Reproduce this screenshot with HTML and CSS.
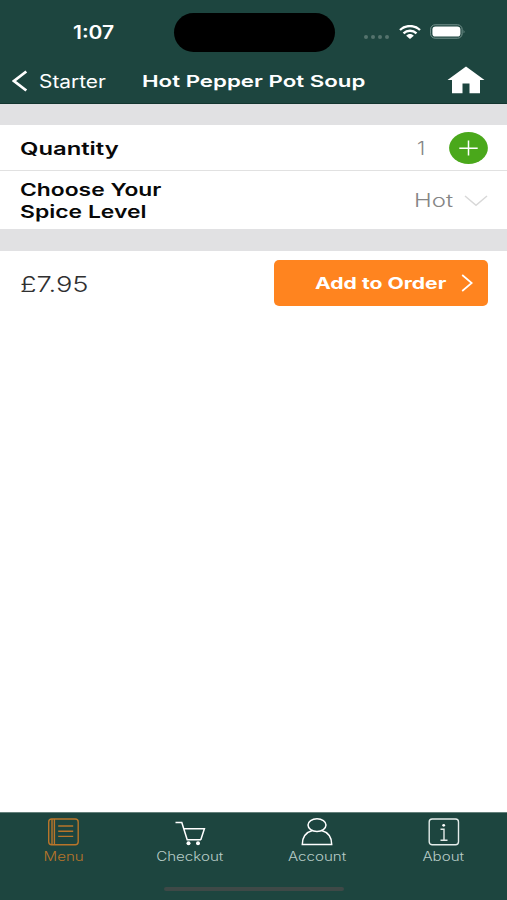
FILE: index.html
```
<!DOCTYPE html>
<html lang="en">
<head>
<meta charset="utf-8">
<title>Hot Pepper Pot Soup</title>
<link rel="stylesheet" href="styles.css">
</head>
<body>
<div class="app">
  <header class="header">
    <div class="status">
      <div class="time"><span class="wide">1:07</span></div>
      <div class="island"></div>
      <div class="dots"><i></i><i></i><i></i><i></i></div>
      <svg class="wifi" width="22" height="14" viewBox="0 0 22 14" preserveAspectRatio="none" fill="none" stroke="#fff" stroke-width="2.3">
        <path d="M1 5C6.500-.3 15.500-.3 21 5M4.500 8.300c3.600-3.400 9.400-3.400 13 0"/>
        <path d="M7.200 10.700c2-2.200 5.600-2.200 7.600 0L11 14z" fill="#fff" stroke="none"/>
      </svg>
      <svg class="battery" width="36" height="15" viewBox="0 0 36 15">
        <rect x=".6" y=".8" width="31.500" height="13.400" rx="4.500" fill="none" stroke="#789590"/>
        <rect x="2.400" y="2.400" width="28" height="10.200" rx="3.200" fill="#fff"/>
        <path d="M33.600 5.500q1.600 2 0 4z" fill="#789590"/>
      </svg>
    </div>
    <nav class="nav">
      <svg class="back" width="16" height="22" viewBox="0 0 16 22" fill="none" stroke="#fff" stroke-width="2.800"><path d="M14.300 1.500 2 11l12.300 9.500"/></svg>
      <div class="starter"><span class="wide">Starter</span></div>
      <h1 class="title"><span class="wide">Hot Pepper Pot Soup</span></h1>
      <svg class="home" width="38" height="28" viewBox="0 0 38 28" fill="#fff"><path d="M19 .5 37.500 14H33v13.300H22.500V17.500h-7v9.800H5V14H.5z"/></svg>
    </nav>
  </header>
  <main class="content">
    <div class="band first"></div>
    <section class="row quantity">
      <div class="label"><span class="wide">Quantity</span></div>
      <div class="count"><span class="wide">1</span></div>
      <svg class="plus" width="40" height="34" viewBox="0 0 40 34"><ellipse cx="19.500" cy="17" rx="19.400" ry="16" fill="#4aa81b"/><path d="M10.300 17.300h18.400M19.500 9.500v15" stroke="#fff" stroke-width="1.500"/></svg>
    </section>
    <section class="row spice">
      <div class="label"><span class="wide choose">Choose Your</span><span class="wide level">Spice Level</span></div>
      <div class="value"><span class="wide">Hot</span></div>
      <svg class="down" width="24" height="12" viewBox="0 0 24 12" fill="none" stroke="#d8d8d8" stroke-width="1.500"><path d="m1 1 11 9.300L23 1"/></svg>
    </section>
    <div class="band"></div>
    <section class="order">
      <div class="price"><span class="wide">£7.95</span></div>
      <button class="add">
        <span class="wide">Add to Order</span>
        <svg width="12" height="18" viewBox="0 0 12 18" fill="none" stroke="#fff" stroke-width="1.700"><path d="m1.200 1 9.500 8-9.500 8"/></svg>
      </button>
    </section>
  </main>
  <footer class="footer">
    <div class="tabs">
      <div class="tab menu">
        <svg width="32" height="28" viewBox="0 0 32 28" fill="none" stroke="currentColor" stroke-width="1.400"><rect x="1.700" y="1" width="29.500" height="25.800" rx="3"/><path d="M5 1v26M7.400 1v26M11.200 8h15M11.200 13.200h15M11.200 18.400h15"/></svg>
        <span class="wide">Menu</span>
      </div>
      <div class="tab checkout">
        <svg width="32" height="28" viewBox="0 0 32 28" fill="none" stroke="#fff" stroke-width="1.500"><path d="M1.500 4.500h6.300l5.400 17.300H27M9.200 10.700h21.200l-3.600 11.100"/><circle cx="14.500" cy="25.300" r="2" fill="#fff" stroke="none"/><circle cx="24" cy="25.300" r="2" fill="#fff" stroke="none"/></svg>
        <span class="wide">Checkout</span>
      </div>
      <div class="tab account">
        <svg width="32" height="28" viewBox="0 0 32 28" fill="none" stroke="#fff" stroke-width="1.500"><ellipse cx="16" cy="7.100" rx="9" ry="6.300"/><path d="M11.500 12.500C4.800 14.300 1.300 19 1.300 26.500h29.400c0-7.500-3.500-12.200-10.200-14"/></svg>
        <span class="wide">Account</span>
      </div>
      <div class="tab about">
        <svg width="32" height="28" viewBox="0 0 32 28" fill="none" stroke="#e4ecea" stroke-width="1.400"><rect x="1.200" y="1" width="29.300" height="25.800" rx="3"/><path d="M12.500 11.200H16v11M12.500 22.200h7"/><circle cx="15.700" cy="7.300" r="1.400" fill="#fff" stroke="none"/></svg>
        <span class="wide">About</span>
      </div>
    </div>
    <div class="indicator"></div>
  </footer>
</div>
</body>
</html>
```
FILE: styles.css
```
* { box-sizing: border-box; }
body { margin: 0; font-family: Inter, "Open Sans", sans-serif; background: #fff; }
svg { display: block; flex: none; }
.app { display: flex; flex-direction: column; width: 507px; height: 900px; overflow: hidden; }
.wide { display: block; width: max-content; white-space: nowrap; transform-origin: left center; }

.header { height: 104px; background: #1d453f; color: #fff; border-bottom: 1px solid #12352f; flex: none; }
.status { display: flex; align-items: center; height: 64px; padding-left: 73px; }
.time { width: 100.5px; padding-top: 1px; font-size: 18px; font-weight: 600; line-height: 22px; }
.time .wide { transform: scaleX(1.17); }
.island { width: 161px; height: 39px; border-radius: 20px; background: #000; }
.dots { display: flex; gap: 3px; width: 25px; margin: 9px 10px 0 29px; }
.dots i { width: 4px; height: 4px; border-radius: 2px; background: #54736d; }
.wifi { margin: -1px 9px 0 0; }
.battery { margin-top: -1px; }
.nav { display: flex; align-items: center; height: 34px; padding-left: 12px; }
.starter { width: 103px; margin-left: 11px; padding-top: 1px; font-size: 18px; line-height: 22px; }
.starter .wide { transform: scaleX(1.16); }
.title { width: 305px; margin: 0; font-size: 16.5px; font-weight: 600; line-height: 22px; }
.title .wide { transform: scaleX(1.35); }
.home { margin-top: -2px; }

.content { flex: 1; }
.band { height: 22px; background: #e1e1e3; }
.band.first { height: 21px; }
.row { display: flex; align-items: center; padding: 0 18px 0 20px; color: #080808; }
.quantity { height: 46px; border-bottom: 1px solid #e1e1e1; }
.spice { height: 58px; }
.label { flex: 1; padding-top: 2px; font-size: 17.5px; font-weight: 600; line-height: 22px; }
.quantity .label .wide { transform: scaleX(1.36); }
.choose { transform: scaleX(1.305); }
.level { transform: scaleX(1.31); }
.count, .value { padding-top: 2px; color: #858585; font-size: 18px; font-weight: 300; line-height: 22px; }
.count { width: 32px; }
.count .wide { transform: scaleX(1.15); }
.value { width: 50px; }
.value .wide { transform: scaleX(1.33); }
.down { margin: 2px 1px 0 0; }
.order { display: flex; align-items: center; height: 64px; padding: 0 19px 0 20px; }
.price { flex: 1; padding-top: 1px; color: #303030; font-size: 22px; font-weight: 300; line-height: 28px; }
.price .wide { transform: scaleX(1.24); }
.add { display: flex; align-items: center; justify-content: space-between; width: 214px; height: 46px; padding: 0 15px 0 41px; border: 0; border-radius: 5px; background: #ff841f; color: #fff; font: 700 16px/22px Inter, sans-serif; }
.add .wide { transform: scaleX(1.32); }

.footer { height: 88px; background: #1d453f; border-top: 1px solid #64807b; flex: none; }
.tabs { display: flex; height: 74px; padding-top: 5px; }
.tab { display: flex; flex-direction: column; align-items: center; flex: 1; color: #b8ccc7; font-size: 12.5px; font-weight: 300; line-height: 18px; }
.tab .wide { margin-top: 2px; transform-origin: center; transform: scaleX(1.21); }
.tab.menu { color: #b9752a; }
.indicator { width: 180px; height: 4px; margin: 0 auto; border-radius: 2px; background: #3e4947; }
```
